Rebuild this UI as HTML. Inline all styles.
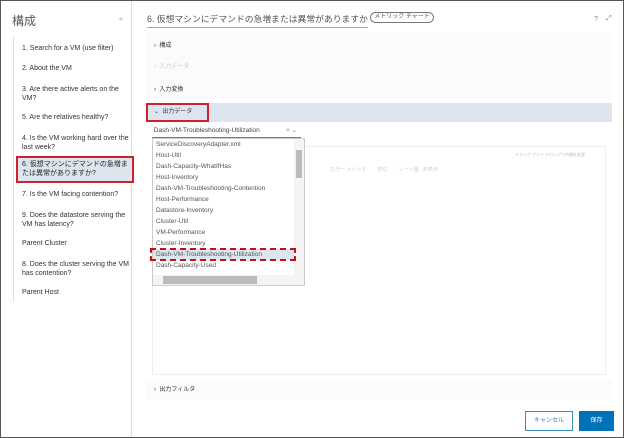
<!DOCTYPE html>
<html><head><meta charset="utf-8"><style>
*{box-sizing:border-box;margin:0;padding:0}
body{width:624px;height:438px;overflow:hidden;background:#fff;font-family:"Liberation Sans","Noto Sans CJK JP",sans-serif;color:#333;position:relative}
.frame{position:absolute;left:0;top:0;width:624px;height:438px;border:1px solid #555}
.side{position:absolute;left:1px;top:1px;width:131px;height:436px;border-right:1px solid #ddd;background:#fff}
.a{position:absolute;font-size:7px;line-height:9px;color:#333}
.t{position:absolute;font-size:12px;color:#555}
</style></head><body>
<div class="frame"></div>
<div class="side">
<div class="t" style="left:11px;top:11px">構成</div>
<div class="a" style="left:118px;top:14px;color:#999">«</div>
<div style="position:absolute;left:12px;top:36px;width:1px;height:265px;background:#ddd"></div>
<div class="a" style="left:21px;top:43px">1. Search for a VM (use filter)</div>
<div class="a" style="left:21px;top:63px">2. About the VM</div>
<div class="a" style="left:21px;top:84px;width:110px">3. Are there active alerts on the VM?</div>
<div class="a" style="left:21px;top:112px">5. Are the relatives healthy?</div>
<div class="a" style="left:21px;top:133px;width:110px">4. Is the VM working hard over the last week?</div>
<div style="position:absolute;left:15px;top:155px;width:118px;height:27px;background:#dde5ee;border:2px solid #d0202a"></div>
<div class="a" style="left:21px;top:159px;width:110px;color:#222">6. 仮想マシンにデマンドの急増または異常がありますか?</div>
<div class="a" style="left:21px;top:189px">7. Is the VM facing contention?</div>
<div class="a" style="left:21px;top:210px;width:110px">9. Does the datastore serving the VM has latency?</div>
<div class="a" style="left:21px;top:238px">Parent Cluster</div>
<div class="a" style="left:21px;top:259px;width:110px">8. Does the cluster serving the VM has contention?</div>
<div class="a" style="left:21px;top:287px">Parent Host</div>
</div>
<div style="position:absolute;left:147px;top:12px;font-size:8.8px;color:#555;border-bottom:1px solid #aaa;padding-bottom:2px;white-space:nowrap">6. 仮想マシンにデマンドの急増または異常がありますか</div>
<div style="position:absolute;left:370px;top:12px;width:64px;height:11px;border:1px solid #777;border-radius:6px;font-size:6px;line-height:9px;text-align:center;color:#555">メトリック チャート</div>
<div class="a" style="left:594px;top:15px;color:#888">?</div>
<div class="a" style="left:606px;top:14px;color:#888">⤢</div>
<div style="position:absolute;left:146px;top:33px;width:466px;height:66px;background:#fcfafc"></div>
<div class="a" style="left:154px;top:42px;font-size:6px">›&nbsp; 構成</div>
<div class="a" style="left:154px;top:63px;font-size:6px;color:#ccc">›&nbsp; 入力データ</div>
<div class="a" style="left:154px;top:86px;font-size:6px">›&nbsp; 入力変換</div>
<div style="position:absolute;left:146px;top:103px;width:466px;height:19px;background:#dde5ee"></div>
<div style="position:absolute;left:146px;top:103px;width:63px;height:19px;border:2px solid #d0202a"></div>
<div class="a" style="left:154px;top:108px;font-size:6px">⌄&nbsp; 出力データ</div>
<div style="position:absolute;left:152px;top:146px;width:454px;height:229px;border:1px solid #eee"></div>
<div class="a" style="left:515px;top:150px;font-size:4px;color:#bbb">ドラッグ アンド ドロップで列順を変更</div>
<div class="a" style="left:330px;top:166px;font-size:5px;color:#ccc">カラー メソッド &nbsp;&nbsp;&nbsp;&nbsp;&nbsp;&nbsp; 単位 &nbsp;&nbsp;&nbsp;&nbsp;&nbsp;&nbsp; ソート順 &nbsp; 非表示</div>
<div style="position:absolute;left:152px;top:126px;width:149px;height:12px;border-bottom:1px solid #3a8fb7;font-size:6.5px;line-height:10px;color:#444">&nbsp;Dash-VM-Troubleshooting-Utilization<span style="position:absolute;right:4px;color:#888">× ⌄</span></div>
<div style="position:absolute;left:152px;top:138px;width:153px;height:148px;border:1px solid #ccc;background:#fff;overflow:hidden;font-size:6.5px;line-height:11px;color:#555">
<div style="padding-left:3px">ServiceDiscoveryAdapter.xml<br>Host-Util<br>Dash-Capacity-WhatIfHas<br>Host-Inventory<br>Dash-VM-Troubleshooting-Contention<br>Host-Performance<br>Datastore-Inventory<br>Cluster-Util<br>VM-Performance<br>Cluster-Inventory<br><span style="display:block;margin-left:-3px;padding-left:3px;width:143px;background:#dde5ee">Dash-VM-Troubleshooting-Utilization</span>Dash-Capacity-Used</div>
<div style="position:absolute;right:0;top:0;width:10px;height:136px;background:#f4f4f4"></div>
<div style="position:absolute;right:2px;top:11px;width:6px;height:28px;background:#bbb"></div>
<div style="position:absolute;left:0;bottom:0;width:151px;height:10px;background:#f4f4f4"></div>
<div style="position:absolute;left:10px;bottom:1px;width:94px;height:8px;background:#bbb"></div>
</div>
<div style="position:absolute;left:150px;top:248px;width:146px;height:13px;border:2px dashed #c0101a"></div>
<div style="position:absolute;left:146px;top:380px;width:466px;height:20px;background:#fcfafc"></div>
<div class="a" style="left:154px;top:386px;font-size:6px">›&nbsp; 出力フィルタ</div>
<div style="position:absolute;left:525px;top:411px;width:48px;height:20px;border:1px solid #3a8fb7;font-size:6px;line-height:18px;text-align:center;color:#3a7fa7">キャンセル</div>
<div style="position:absolute;left:579px;top:411px;width:35px;height:20px;background:#0072b8;font-size:6px;line-height:20px;text-align:center;color:#fff">保存</div>
</body></html>
